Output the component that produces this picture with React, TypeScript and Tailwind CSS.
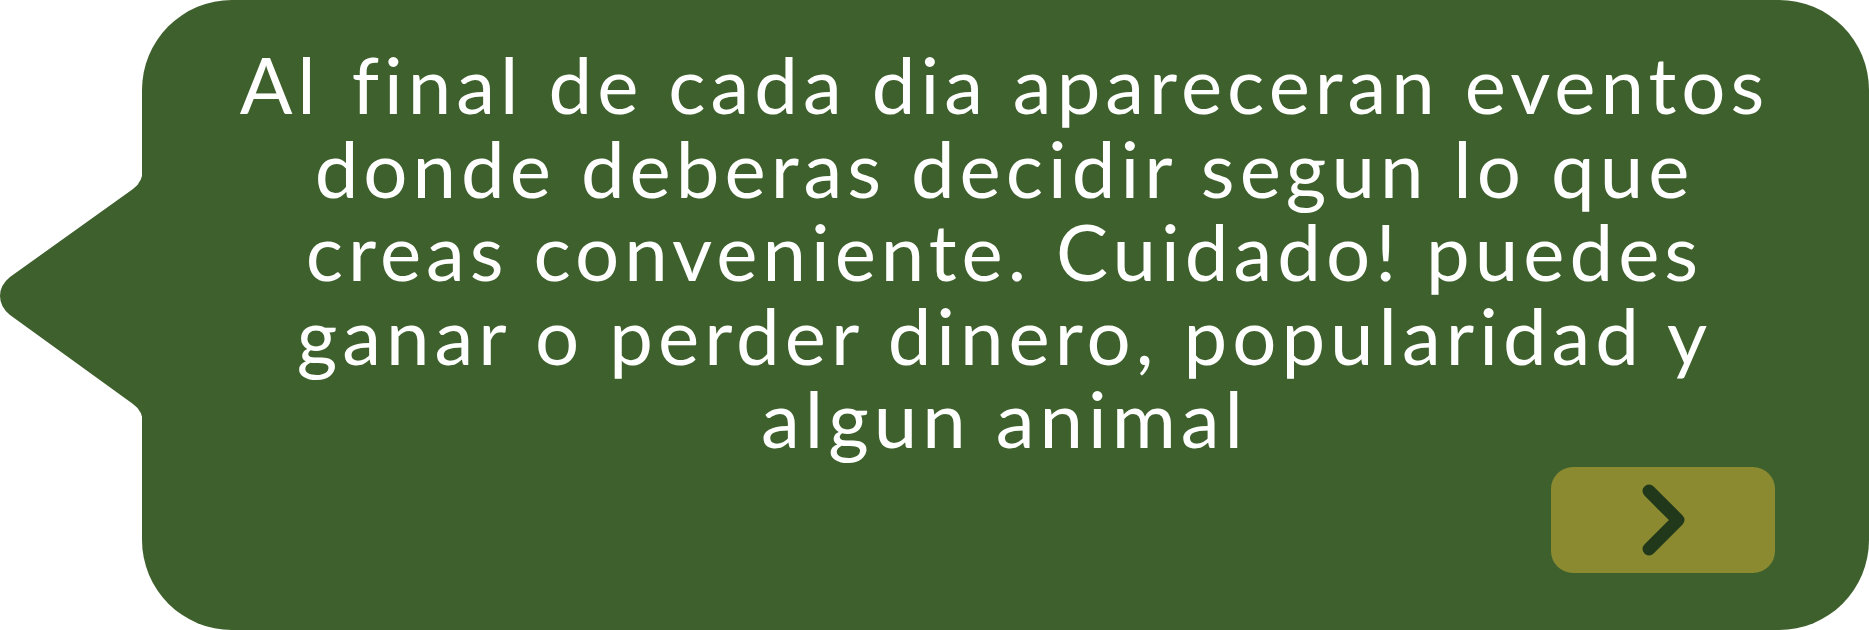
export default function App() {
  return (
    <div className="flex h-[630px] w-[1869px] bg-white">
      <svg
        width="150"
        height="630"
        viewBox="0 0 150 630"
        className="relative z-10 mr-[-8px] shrink-0"
      >
        <path
          d="M150 160 L143 160 L143 168 Q143 182 133 189 L10 277 Q0 285 0 296 Q0 307 10 315 L133 404 Q143 411 143 424 L143 432 L150 432 Z"
          fill="#3e602c"
        />
      </svg>
      <div className="flex h-[630px] flex-1 flex-col rounded-[90px] bg-[#3e602c] pr-[2px] pt-[43px]">
        <p className="whitespace-pre text-center font-['Lato',sans-serif] text-[78px] leading-[83.5px] tracking-[5px] text-white [font-variant-ligatures:none]">
          <span className="mr-[6px]">Al</span>
          {" final de cada dia apareceran eventos"}
          <br />
          donde deberas decidir segun lo que
          <br />
          creas conveniente. Cuidado! puedes
          <br />
          ganar o perder dinero, popularidad y
          <br />
          algun animal
        </p>
        <button className="mr-[92px] mt-[6px] flex h-[106px] w-[224px] items-center justify-center self-end rounded-[22px] bg-[#8b8a30]">
          <svg width="224" height="106" viewBox="0 0 224 106">
            <path
              d="M98 24 L127 53 L98 82"
              fill="none"
              stroke="#22381a"
              strokeWidth="13"
              strokeLinecap="round"
              strokeLinejoin="round"
            />
          </svg>
        </button>
      </div>
    </div>
  );
}
